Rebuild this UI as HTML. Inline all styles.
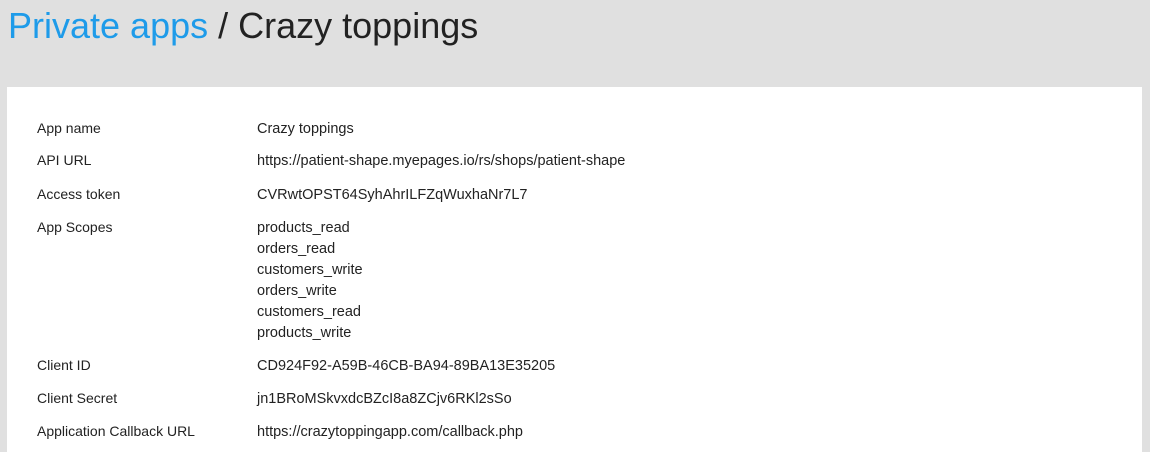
<!DOCTYPE html>
<html><head><style>
html,body{margin:0;width:1150px;height:452px;overflow:hidden}
body{background:#e0e0e0;font-family:"Liberation Sans",sans-serif;position:relative}
h1{position:absolute;left:8px;top:4px;margin:0;font-weight:normal;font-size:36px;color:#222;line-height:44px;white-space:nowrap}
h1 span{color:#1e9be9}
.panel{position:absolute;left:7px;top:87px;width:1135px;height:365px;background:#fff}
.row{position:absolute;left:37px;font-size:14px;color:#222;line-height:21px}
.v{position:absolute;left:257px;font-size:14.5px;color:#222;line-height:21px;white-space:nowrap;margin-top:1px}
</style></head><body>
<h1><span>Private apps</span> / Crazy toppings</h1>
<div class="panel"></div>
<div class="row" style="top:118px">App name</div><div class="v" style="top:118px">Crazy toppings</div>
<div class="row" style="top:150px">API URL</div><div class="v" style="top:150px">https://patient-shape.myepages.io/rs/shops/patient-shape</div>
<div class="row" style="top:184px">Access token</div><div class="v" style="top:184px">CVRwtOPST64SyhAhrILFZqWuxhaNr7L7</div>
<div class="row" style="top:217px">App Scopes</div><div class="v" style="top:217px">products_read<br>orders_read<br>customers_write<br>orders_write<br>customers_read<br>products_write</div>
<div class="row" style="top:355px">Client ID</div><div class="v" style="top:355px">CD924F92-A59B-46CB-BA94-89BA13E35205</div>
<div class="row" style="top:388px">Client Secret</div><div class="v" style="top:388px">jn1BRoMSkvxdcBZcI8a8ZCjv6RKl2sSo</div>
<div class="row" style="top:421px">Application Callback URL</div><div class="v" style="top:421px">https://crazytoppingapp.com/callback.php</div>
</body></html>
